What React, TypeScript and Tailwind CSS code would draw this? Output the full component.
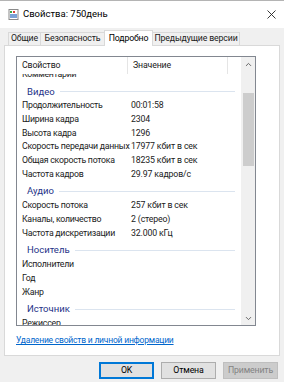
import { ChevronUp, ChevronDown } from 'lucide-react';

type Row = { g?: string; k?: string; v?: string };

const rows: Row[] = [
  { k: 'Комментарии' },
  { g: 'Видео' },
  { k: 'Продолжительность', v: '00:01:58' },
  { k: 'Ширина кадра', v: '2304' },
  { k: 'Высота кадра', v: '1296' },
  { k: 'Скорость передачи данных', v: '17977 кбит в сек' },
  { k: 'Общая скорость потока', v: '18235 кбит в сек' },
  { k: 'Частота кадров', v: '29.97 кадров/с' },
  { g: 'Аудио' },
  { k: 'Скорость потока', v: '257 кбит в сек' },
  { k: 'Каналы, количество', v: '2 (стерео)' },
  { k: 'Частота дискретизации', v: '32.000 кГц' },
  { g: 'Носитель' },
  { k: 'Исполнители' },
  { k: 'Год' },
  { k: 'Жанр' },
  { g: 'Источник' },
  { k: 'Режиссер' },
];

const tabs = [
  { t: 'Общие', w: 'w-[33px]' },
  { t: 'Безопасность', w: 'w-[63px]' },
  { t: 'Подробно', w: 'w-[49px]' },
  { t: 'Предыдущие версии', w: 'w-[87px]' },
];

export default function App() {
  return (
    <div className="w-[284px] h-[382px] bg-[#f0f0f0] flex flex-col text-[8.75px] tracking-[-0.15px] text-[#1a1a1a] font-['Roboto',sans-serif] overflow-hidden">
      {/* Title bar */}
      <div className="h-[28px] bg-white border-t border-[#b4b4b4] flex items-center pl-[8px] pr-[6px]">
        <svg width="11" height="11" viewBox="0 0 11 11" className="mr-[4px]">
          <rect x="1" y="0.5" width="9" height="10" fill="#fff" stroke="#8a8a8a" />
          <rect x="2" y="2" width="2" height="2" fill="#3aa845" />
          <rect x="5" y="2" width="2" height="2" fill="#d8433a" />
          <rect x="2" y="5" width="7" height="4" fill="#7aa2d6" />
        </svg>
        <span className="text-[9.5px] tracking-normal text-black">Свойства: 750день</span>
        <svg width="9" height="9" viewBox="0 0 9 9" className="ml-auto mr-[2px]">
          <path d="M0.5 0.5L8.5 8.5M8.5 0.5L0.5 8.5" stroke="#222" strokeWidth="0.9" />
        </svg>
      </div>

      {/* Tabs */}
      <div className="h-[16px] mt-px flex items-end pl-[8px] relative z-10 whitespace-nowrap">
        {tabs.map((tab, i) =>
          i === 2 ? (
            <div key={tab.t} className={`${tab.w} h-[16px] -mb-px bg-white border border-b-0 border-[#d9d9d9] flex items-center justify-center text-black`}>
              {tab.t}
            </div>
          ) : (
            <div key={tab.t} className={`${tab.w} h-[13px] bg-[#f0f0f0] border border-b-0 border-[#d9d9d9] ${i === 1 ? 'border-l-0 border-r-0' : ''} ${i === 3 ? 'border-l-0' : ''} flex items-center justify-center`}>
              {tab.t}
            </div>
          )
        )}
      </div>

      {/* Panel */}
      <div className="mx-[4px] h-[311px] bg-white border border-[#d9d9d9] pl-[11px] pt-[10px] flex flex-col">
        <div className="w-[240px] h-[270px] border border-[#828790] flex">
          <div className="flex-1 flex flex-col min-w-0">
            <div className="h-[17px] flex shrink-0 bg-white">
              <div className="w-[111px] border-r border-[#e5e5e5] pl-[5px] flex items-center">Свойство</div>
              <div className="w-[100px] border-r border-[#e5e5e5] pl-[5px] flex items-center">Значение</div>
            </div>
            <div className="flex-1 overflow-hidden">
              <div className="mt-[-6.5px]">
                {rows.map((r, i) =>
                  r.g ? (
                    <div key={i} className="h-[18px] flex items-center pt-[3px] pl-[10px] pr-[6px] gap-[5px]">
                      <span className="text-[9.5px] tracking-normal text-[#1e3287]">{r.g}</span>
                      <div className="flex-1 h-px bg-[#dbe4ef]" />
                    </div>
                  ) : (
                    <div key={i} className="h-[13.66px] flex items-center pl-[5px] whitespace-nowrap">
                      <span className="w-[109px] shrink-0 tracking-[-0.25px]">{r.k}</span>
                      <span>{r.v}</span>
                    </div>
                  )
                )}
              </div>
            </div>
          </div>
          {/* Scrollbar */}
          <div className="w-[14px] bg-[#f0f0f0] flex flex-col items-center">
            <div className="h-[14px] flex items-center justify-center">
              <ChevronUp size={9} strokeWidth={2.5} className="text-[#606060]" />
            </div>
            <div className="mt-[22px] w-[11px] h-[73px] bg-[#cdcdcd]" />
            <div className="flex-1" />
            <div className="h-[14px] flex items-center justify-center">
              <ChevronDown size={9} strokeWidth={2.5} className="text-[#606060]" />
            </div>
          </div>
        </div>
        <a href="#" className="mt-[8px] text-[8.5px] tracking-[-0.2px] text-[#0066cc] underline">Удаление свойств и личной информации</a>
      </div>

      {/* Buttons */}
      <div className="flex justify-end gap-[7px] pr-[6px] mt-[6px]">
        <button className="w-[55px] h-[17px] bg-[#e1e1e1] border border-[#0078d7] outline outline-1 outline-[#0078d7] -outline-offset-2 text-black">OK</button>
        <button className="w-[55px] h-[17px] bg-[#e1e1e1] border border-[#adadad] text-black">Отмена</button>
        <button className="w-[55px] h-[17px] bg-[#cccccc] border border-[#bfbfbf] text-[#838383]">Применить</button>
      </div>
    </div>
  );
}
